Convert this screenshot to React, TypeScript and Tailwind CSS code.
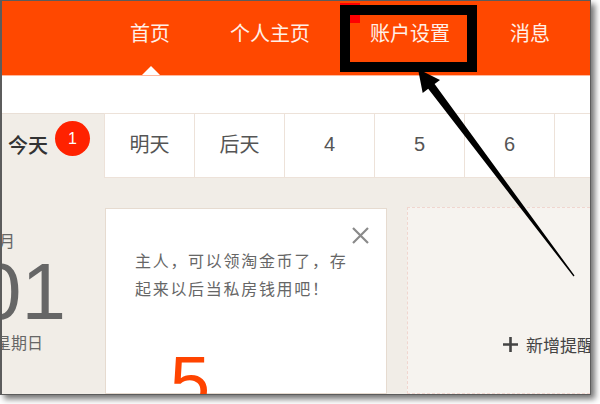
import React from "react";

const CJK = { fontFamily: '"Noto Sans CJK SC", "Noto Sans", sans-serif' };
const NUM = { fontFamily: '"Liberation Sans", Arial, sans-serif' };

export default function App() {
  const tabs = ["明天", "后天", "4", "5", "6"];
  return (
    <div className="w-[600px] h-[404px] bg-white relative overflow-hidden" style={CJK}>
      <div className="w-[591px] h-[395px] border-l-2 border-t border-r border-b border-[#5c5c5c] shadow-[4px_4px_6px_rgba(0,0,0,0.55)] overflow-hidden relative flex flex-col bg-[#f1ede7]">
        {/* header */}
        <div className="h-[75px] shrink-0 bg-[#ff4800] relative flex items-center pl-[128px] gap-[60px] text-[20px] text-[#fff0e8] border-b border-[#ffb89c]">
          <span className="-mt-[10px]">首页</span>
          <span className="-mt-[10px]">个人主页</span>
          <span className="-mt-[10px]">账户设置</span>
          <span className="-mt-[10px]">消息</span>
          <div className="absolute bottom-0 left-[140px] w-0 h-0 border-l-[9px] border-r-[9px] border-b-[9px] border-l-transparent border-r-transparent border-b-white" />
        </div>
        {/* white strip */}
        <div className="h-[37px] shrink-0 bg-white" />
        {/* tabs */}
        <div className="h-[65px] shrink-0 flex bg-white">
          <div className="w-[102px] shrink-0 bg-[#f1ede7] border-t border-[#e9dfd6] relative flex items-center">
            <span className="ml-[6px] -mt-[2px] text-[20px] text-[#333] font-medium">今天</span>
            <span className="absolute left-[53px] top-[7px] w-[35px] h-[35px] rounded-full bg-[#ff2200] text-white text-[16px] flex items-center justify-center" style={NUM}>1</span>
          </div>
          {tabs.map((t) => (
            <div
              key={t}
              className="w-[90px] shrink-0 border-l border-t border-b border-[#ede2d9] bg-white flex items-center justify-center text-[20px] text-[#555] pb-[3px]"
              style={/^\d$/.test(t) ? NUM : undefined}
            >
              {t}
            </div>
          ))}
          <div className="flex-1 border-l border-t border-b border-[#ede2d9] bg-white" />
        </div>
        {/* body */}
        <div className="flex-1 flex pt-[30px]">
          <div className="w-[103px] shrink-0 flex flex-col text-[#666] pt-[22px]">
            <span className="ml-[-12px] text-[16px] leading-[20px]">1月</span>
            <span className="ml-[-25px] mt-[2px] text-[80px] leading-[80px]" style={NUM}>01</span>
            <span className="ml-[-7px] text-[16px] leading-[20px]">星期日</span>
          </div>
          <div className="w-[282px] shrink-0 bg-white border border-[#e6dbd0] relative pl-[29px] pt-[37px]">
            <p className="text-[16px] leading-[28px] tracking-[1.7px] text-[#666]">
              主人，可以领淘金币了，存
              <br />
              起来以后当私房钱用吧！
            </p>
            <svg className="absolute right-[16px] top-[17px]" width="19" height="19" viewBox="0 0 19 19">
              <path d="M2 2 L17 17 M17 2 L2 17" stroke="#8a8a8a" strokeWidth="2.2" />
            </svg>
            <span className="absolute left-[64px] top-[137px] text-[72px] leading-[72px] text-[#ff4400]" style={NUM}>5</span>
          </div>
          <div className="ml-[20px] mt-[-1px] flex-1 bg-[#f6f3ef] border border-dashed border-[#f0d6cf] pl-[94px] pt-[124px]">
            <div className="flex items-center gap-[7px] text-[17px] text-[#444] whitespace-nowrap">
              <svg width="17" height="17" viewBox="0 0 17 17">
                <path d="M8.5 1 V16 M1 8.5 H16" stroke="#444" strokeWidth="2.6" />
              </svg>
              <span>新增提醒</span>
            </div>
          </div>
        </div>

        {/* annotation: red marker + black box */}
        <div className="absolute left-[338px] top-[2px] w-[20px] h-[20px] bg-[#ff0000]" />
        <div className="absolute left-[338px] top-[4px] w-[137px] h-[67px] border-[10px] border-black" />
      </div>

      {/* annotation arrow */}
      <svg className="absolute left-0 top-0 pointer-events-none" width="600" height="404" viewBox="0 0 600 404">
        <polygon
          points="418,69 440,80 434.6,84 574.5,275.5 573.5,276.5 428.2,88.8 422.7,93.1"
          fill="#000"
        />
      </svg>
    </div>
  );
}
